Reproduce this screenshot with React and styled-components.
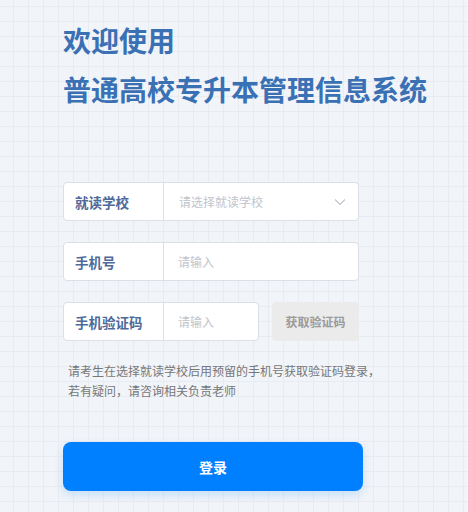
import React from "react";
import styled, { createGlobalStyle } from "styled-components";

const Global = createGlobalStyle`
  html, body { margin: 0; padding: 0; }
  body {
    font-family: "Noto Sans CJK SC", "Noto Sans", sans-serif;
    background-color: #f1f4f8;
    background-image:
      linear-gradient(to right, #e8ecf1 1px, transparent 1px),
      linear-gradient(to bottom, #e8ecf1 1px, transparent 1px);
    background-size: 15px 15px;
    background-position: 13px 6px;
    min-height: 512px;
  }
`;

const Page = styled.div`
  padding: 16px 0 0 63px;
  width: 300px;
`;

const Title = styled.h1`
  margin: 0;
  font-size: 28px;
  line-height: 49px;
  font-weight: 700;
  color: #3a70b4;
  white-space: nowrap;
`;

const Form = styled.div`
  margin-top: 68px;
  display: flex;
  flex-direction: column;
  gap: 21px;
`;

const Row = styled.div`
  display: flex;
  gap: 13px;
  width: 296px;
`;

const Field = styled.div`
  flex: 1;
  display: flex;
  height: 39px;
  box-sizing: border-box;
  border: 1px solid #dcdfe6;
  border-radius: 4px;
  background: #fff;
  overflow: hidden;
`;

const Label = styled.div`
  width: 100px;
  flex: none;
  box-sizing: border-box;
  border-right: 1px solid #dcdfe6;
  display: flex;
  align-items: center;
  padding-left: 11px;
  font-size: 13.5px;
  font-weight: 700;
  color: #4d6a9a;
`;

const Input = styled.div`
  flex: 1;
  display: flex;
  align-items: center;
  justify-content: space-between;
  padding: 0 12px 0 ${(p) => (p.$select ? 15 : 14)}px;
  font-size: 12px;
  color: #c0c4cc;
`;

const CodeButton = styled.div`
  width: 87px;
  height: 39px;
  flex: none;
  border-radius: 4px;
  background: #ebebeb;
  color: #9a9a9a;
  font-size: 12px;
  font-weight: 700;
  display: flex;
  align-items: center;
  justify-content: center;
`;

const Hint = styled.p`
  margin: 20px 0 0;
  padding-left: 5px;
  font-size: 12px;
  line-height: 20px;
  color: #777;
  white-space: nowrap;
`;

const LoginButton = styled.button`
  margin-top: 41px;
  width: 300px;
  height: 49px;
  border: none;
  border-radius: 8px;
  background: #0080ff;
  color: #fff;
  font-family: inherit;
  font-size: 14px;
  font-weight: 700;
  box-shadow: 0 4px 10px rgba(0, 128, 255, 0.18);
`;

const Chevron = () => (
  <svg width="12" height="8" viewBox="0 0 12 8" fill="none">
    <path d="M1 1.5 L6 6.5 L11 1.5" stroke="#c0c4cc" strokeWidth="1.2" />
  </svg>
);

export default function App() {
  return (
    <>
      <Global />
      <Page>
        <Title>欢迎使用</Title>
        <Title>普通高校专升本管理信息系统</Title>
        <Form>
          <Row>
            <Field>
              <Label>就读学校</Label>
              <Input $select>
                <span>请选择就读学校</span>
                <Chevron />
              </Input>
            </Field>
          </Row>
          <Row>
            <Field>
              <Label>手机号</Label>
              <Input>请输入</Input>
            </Field>
          </Row>
          <Row>
            <Field>
              <Label>手机验证码</Label>
              <Input>请输入</Input>
            </Field>
            <CodeButton>获取验证码</CodeButton>
          </Row>
        </Form>
        <Hint>
          请考生在选择就读学校后用预留的手机号获取验证码登录，
          <br />
          若有疑问，请咨询相关负责老师
        </Hint>
        <LoginButton>登录</LoginButton>
      </Page>
    </>
  );
}
